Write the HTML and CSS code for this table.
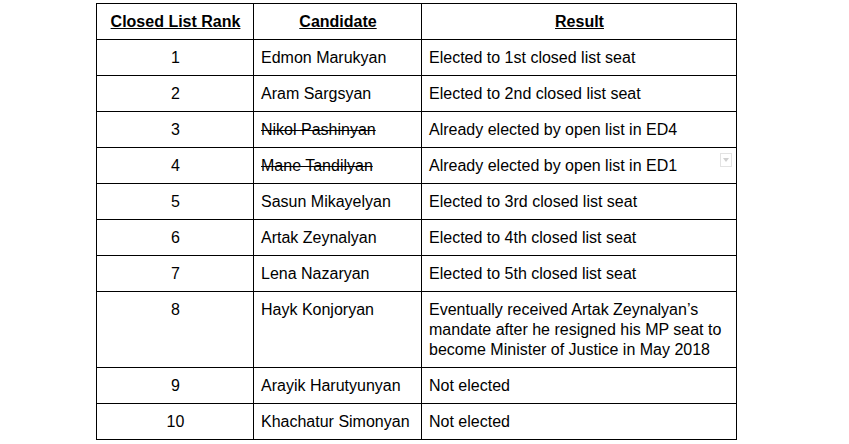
FILE: index.html
```html
<!DOCTYPE html>
<html>
<head>
<meta charset="utf-8">
<link rel="stylesheet" href="styles.css">
</head>
<body>
<table class="list">
  <colgroup>
    <col class="c-rank">
    <col class="c-name">
    <col class="c-result">
  </colgroup>
  <thead>
    <tr>
      <th>Closed List Rank</th>
      <th>Candidate</th>
      <th>Result</th>
    </tr>
  </thead>
  <tbody>
    <tr><td class="num">1</td><td>Edmon Marukyan</td><td>Elected to 1st closed list seat</td></tr>
    <tr><td class="num">2</td><td>Aram Sargsyan</td><td>Elected to 2nd closed list seat</td></tr>
    <tr><td class="num">3</td><td class="struck">Nikol Pashinyan</td><td>Already elected by open list in ED4</td></tr>
    <tr><td class="num">4</td><td class="struck">Mane Tandilyan</td><td class="has-drop">Already elected by open list in ED1<span class="drop"></span></td></tr>
    <tr><td class="num">5</td><td>Sasun Mikayelyan</td><td>Elected to 3rd closed list seat</td></tr>
    <tr><td class="num">6</td><td>Artak Zeynalyan</td><td>Elected to 4th closed list seat</td></tr>
    <tr><td class="num">7</td><td>Lena Nazaryan</td><td>Elected to 5th closed list seat</td></tr>
    <tr><td class="num">8</td><td>Hayk Konjoryan</td><td>Eventually received Artak Zeynalyan’s mandate after he resigned his MP seat to become Minister of Justice in May 2018</td></tr>
    <tr><td class="num">9</td><td>Arayik Harutyunyan</td><td>Not elected</td></tr>
    <tr><td class="num">10</td><td>Khachatur Simonyan</td><td>Not elected</td></tr>
  </tbody>
</table>
</body>
</html>
```

FILE: styles.css
```css
html, body {
  margin: 0;
  padding: 0;
  background: #fff;
}
body {
  padding: 3px 0 0 96px;
  font-family: "Liberation Sans", Arial, sans-serif;
  font-size: 16px;
  color: #000;
}
.list {
  border-collapse: collapse;
  table-layout: fixed;
  width: 640px;
}
.c-rank { width: 157px; }
.c-name { width: 168px; }
.c-result { width: 315px; }
.list th, .list td {
  border: 1px solid #000;
  padding: 8px 6px 7px 7px;
  line-height: 20px;
  vertical-align: top;
  text-align: left;
}
.list th {
  font-weight: bold;
  text-decoration: underline;
  text-align: center;
}
.list td.num {
  text-align: center;
}
.struck {
  text-decoration: line-through;
}
.has-drop {
  position: relative;
}
.drop {
  position: absolute;
  top: 5px;
  right: 4px;
  width: 10px;
  height: 12px;
  border: 1px solid #e3e3e3;
  background: #fff;
}
.drop::after {
  content: "";
  position: absolute;
  left: 2px;
  top: 4px;
  border-left: 3px solid transparent;
  border-right: 3px solid transparent;
  border-top: 4px solid #d0d0d0;
}
```
